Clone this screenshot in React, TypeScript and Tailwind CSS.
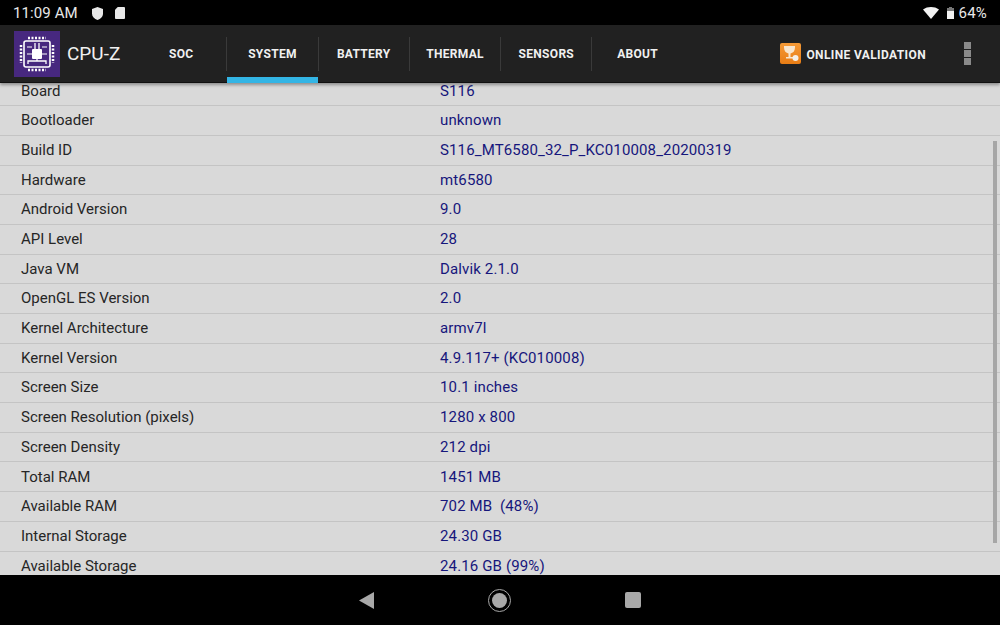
import { Fragment } from "react"

const rows = [
  ["Board", "S116"],
  ["Bootloader", "unknown"],
  ["Build ID", "S116_MT6580_32_P_KC010008_20200319"],
  ["Hardware", "mt6580"],
  ["Android Version", "9.0"],
  ["API Level", "28"],
  ["Java VM", "Dalvik 2.1.0"],
  ["OpenGL ES Version", "2.0"],
  ["Kernel Architecture", "armv7l"],
  ["Kernel Version", "4.9.117+ (KC010008)"],
  ["Screen Size", "10.1 inches"],
  ["Screen Resolution (pixels)", "1280 x 800"],
  ["Screen Density", "212 dpi"],
  ["Total RAM", "1451 MB"],
  ["Available RAM", "702 MB  (48%)"],
  ["Internal Storage", "24.30 GB"],
  ["Available Storage", "24.16 GB (99%)"],
]

const tabs = ["SOC", "SYSTEM", "BATTERY", "THERMAL", "SENSORS", "ABOUT"]

function CpuLogo() {
  return (
    <div className="w-[46px] h-[46px] bg-[#47287f] flex items-center justify-center shrink-0">
      <svg width="38" height="38" viewBox="0 0 38 38" fill="none" stroke="#fff">
        <rect x="6" y="6" width="26" height="26" rx="2" strokeWidth="1.6" />
        <rect x="14" y="14" width="10" height="10" rx="1" fill="#fff" stroke="none" />
        <path d="M17 8v6M21 8v6M10 29v-3h18v3M19 24v2" strokeWidth="1.3" />
        <path d="M10 3h18M10 35h18M3 10v18M35 10v18" strokeWidth="2.5" strokeDasharray="2 1.5" />
        <path d="M9 12h5M9 19h5M24 19h5M24 12h5" strokeWidth="1.2" />
      </svg>
    </div>
  )
}

function TrophyIcon() {
  return (
    <div className="w-[21px] h-[21px] rounded-[2px] bg-gradient-to-b from-[#f59a36] to-[#e87d14] flex items-center justify-center shrink-0">
      <svg width="19" height="19" viewBox="0 0 19 19" fill="#f8e6cf">
        <path d="M3 2h11v1.500c0 3.500-2 5.500-4.500 6v3.500H12v1.500H5V13h2.500V9.500C5 9 3 7 3 3.500z" />
        <circle cx="14.500" cy="14" r="3" fill="#f4efe8" />
      </svg>
    </div>
  )
}

export default function App() {
  return (
    <div className="w-[1000px] h-[625px] flex flex-col overflow-hidden bg-black font-['Roboto',sans-serif]">
      {/* status bar */}
      <div className="h-[25px] shrink-0 bg-black flex items-center pl-[13px] pr-[13px] pt-px text-[#e8e8e8]">
        <span className="text-[15px] tracking-[0.1px] mr-[14px]">11:09 AM</span>
        <svg width="11" height="13" viewBox="0 0 12 14" fill="#e8e8e8" className="mr-[12px]">
          <path d="M6 0l6 2v5c0 3.500-2.500 6-6 7-3.500-1-6-3.500-6-7V2z" />
        </svg>
        <svg width="10" height="12" viewBox="0 0 11 13" fill="#e8e8e8">
          <path d="M3 0h7a1 1 0 0 1 1 1v11a1 1 0 0 1-1 1H1a1 1 0 0 1-1-1V3z" />
        </svg>
        <div className="ml-auto flex items-center">
          <svg width="16" height="12" viewBox="0 0 16 12" fill="#f2f2f2" className="mr-[8px]">
            <path d="M0 2.500C4.500-.8 11.500-.8 16 2.500L8 12z" />
          </svg>
          <svg width="7" height="12" viewBox="0 0 7 12" className="mr-[5px]">
            <path d="M2 0h3v1h2v11H0V1h2z" fill="#777" />
            <path d="M0 4h7v8H0z" fill="#f2f2f2" />
          </svg>
          <span className="text-[15px] tracking-[0.2px]">64%</span>
        </div>
      </div>

      {/* app bar */}
      <div className="h-[58px] shrink-0 bg-[#212121] border-b border-[#111] flex items-center relative z-10 shadow-[0_2px_3px_rgba(0,0,0,0.35)]">
        <div className="w-[136px] pl-[14px] flex items-center gap-[7px] shrink-0">
          <CpuLogo />
          <span className="text-[#f0f0f0] text-[19px] pt-px">CPU-Z</span>
        </div>
        <div className="flex h-full pt-[12px]">
          {tabs.map((t, i) => (
            <Fragment key={t}>
              {i > 0 && <div className="w-px h-[34px] bg-[#3a3a3a] shrink-0" />}
              <div className="w-[90.300px] h-[46px] shrink-0 relative flex justify-center pt-[8px]">
                <span className="text-[12px] leading-[18px] font-bold text-[#f0f0f0] tracking-[0.3px]">{t}</span>
                {t === "SYSTEM" && (
                  <div className="absolute left-0 right-0 bottom-0 h-[6px] bg-[#33b5e5]" />
                )}
              </div>
            </Fragment>
          ))}
        </div>
        <div className="ml-auto flex items-center">
          <TrophyIcon />
          <span className="ml-[5px] text-[12px] pt-[2px] font-bold text-[#f0f0f0] tracking-[0.38px]">ONLINE VALIDATION</span>
          <div className="ml-[38px] mr-[29px] flex flex-col gap-px">
            <div className="w-[7px] h-[7px] bg-[#8a8a8a]" />
            <div className="w-[7px] h-[7px] bg-[#8a8a8a]" />
            <div className="w-[7px] h-[7px] bg-[#8a8a8a]" />
          </div>
        </div>
      </div>

      {/* list */}
      <div className="flex-1 min-h-0 overflow-hidden relative bg-[#d9d9d9]">
        <div className="-mt-[6.500px]">
          {rows.map(([label, value]) => (
            <div
              key={label}
              className="h-[29.690px] border-b border-[#c4c4c4] flex items-center pl-[21px] text-[15px]"
            >
              <span className="w-[419px] shrink-0 text-[#262626]">{label}</span>
              <span className="text-[#16167c] tracking-[0.14px] whitespace-pre">{value}</span>
            </div>
          ))}
        </div>
        {/* scrollbar */}
        <div className="absolute right-[3px] top-[58px] w-[4px] h-[402px] bg-[#a6a6a6]" />
      </div>

      {/* nav bar */}
      <div className="h-[50px] shrink-0 bg-black flex items-center">
        <svg width="15" height="17" viewBox="0 0 15 17" fill="#a8a8a8" className="ml-[359px]">
          <path d="M15 0v17L0 8.500z" />
        </svg>
        <div className="ml-[114px] w-[23px] h-[23px] rounded-full border border-[#a8a8a8] flex items-center justify-center">
          <div className="w-[15px] h-[15px] rounded-full bg-[#a8a8a8]" />
        </div>
        <div className="ml-[114px] w-[16px] h-[16px] rounded-[2px] bg-[#a8a8a8]" />
      </div>
    </div>
  )
}
